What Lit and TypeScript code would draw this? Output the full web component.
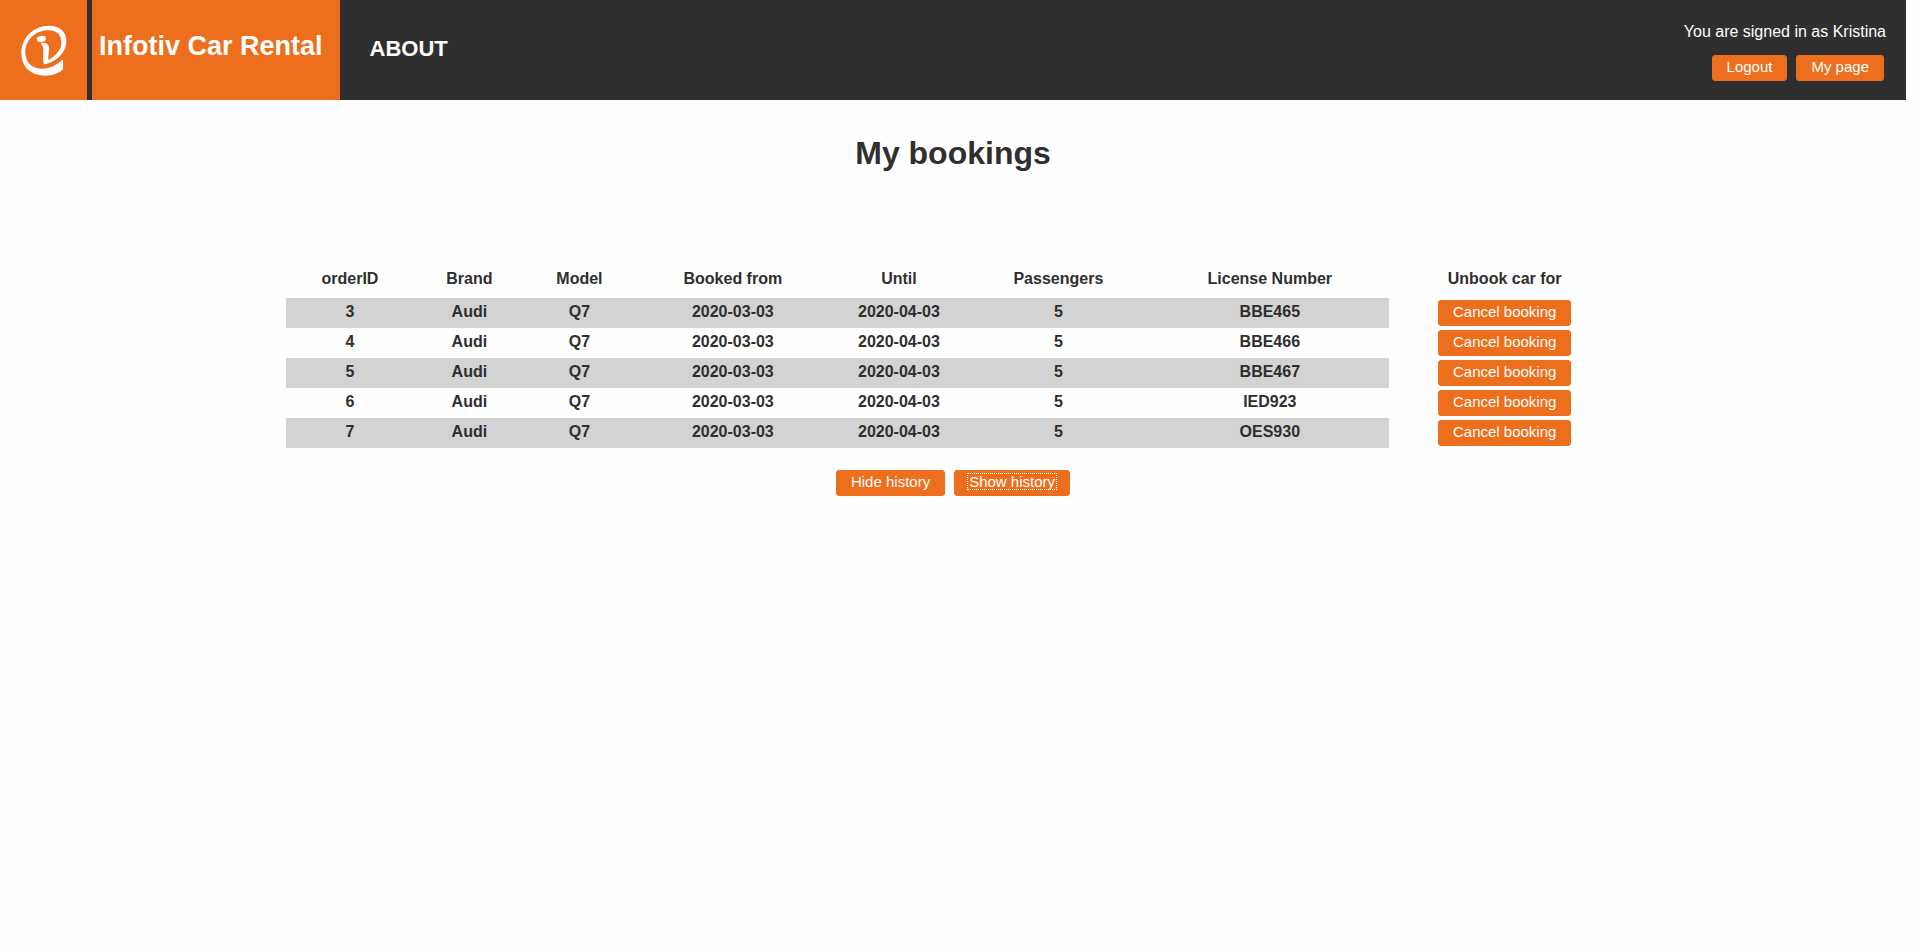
import { LitElement, html, css } from "lit";
import { customElement, state } from "lit/decorators.js";

interface Booking {
  id: number;
  brand: string;
  model: string;
  from: string;
  until: string;
  passengers: number;
  license: string;
}

const licenses: [number, string][] = [
  [3, "BBE465"],
  [4, "BBE466"],
  [5, "BBE467"],
  [6, "IED923"],
  [7, "OES930"],
];

@customElement("app-root")
export class AppRoot extends LitElement {
  @state() private bookings: Booking[] = licenses.map(([id, license]) => ({
    id,
    license,
    brand: "Audi",
    model: "Q7",
    from: "2020-03-03",
    until: "2020-04-03",
    passengers: 5,
  }));

  static styles = css`
    :host {
      display: block;
      box-sizing: border-box;
      min-height: 100vh;
      padding-right: 14px;
      background: #fefefe;
      color: #2f2f2f;
      font-family: "Liberation Sans", Arial, sans-serif;
      font-size: 16px;
      line-height: 18px;
    }
    .header {
      display: flex;
      height: 100px;
      background: #2f2f2f;
      color: #fefefe;
    }
    .logo {
      box-sizing: border-box;
      width: 87px;
      padding: 15px 0 0 10px;
      margin-right: 5px;
      background: #ed6f1d;
    }
    .logo svg {
      display: block;
      width: 70px;
      height: 70px;
    }
    .brand {
      margin: 0;
      padding: 30px 17px 0 7px;
      background: #ed6f1d;
      font-size: 27px;
      line-height: 32px;
      white-space: nowrap;
    }
    .brand a,
    .about {
      color: inherit;
      text-decoration: none;
    }
    .about {
      padding: 37px 0 0 30px;
      font-size: 22px;
      font-weight: bold;
      line-height: 24px;
    }
    .account {
      margin-left: auto;
      padding: 23px 20px 0 0;
      text-align: right;
    }
    .account p {
      margin: 0 0 14px;
    }
    .buttons {
      display: flex;
      justify-content: center;
      gap: 9px;
    }
    .account .buttons {
      justify-content: flex-end;
      padding-right: 2px;
    }
    .button {
      box-sizing: border-box;
      height: 26px;
      margin: 0;
      padding: 2px 14px 5px;
      border: 1px solid #ed6f1d;
      border-radius: 3px;
      background: #ed6f1d;
      color: #fefefe;
      font-family: inherit;
      font-size: 15px;
      line-height: 17px;
      white-space: nowrap;
      cursor: pointer;
    }
    .button.focused {
      padding: 2px 12px 5px;
    }
    .button.focused span {
      display: block;
      padding: 0 2px;
      outline: 1px dotted #fefefe;
      outline-offset: -1px;
    }
    .title {
      margin: 0;
      padding: 34px 0 98px;
      font-size: 32px;
      line-height: 38px;
      text-align: center;
    }
    .bookings {
      width: 70%;
      margin: 0 auto 22px;
      border-collapse: collapse;
      table-layout: fixed;
      font-weight: bold;
      text-align: center;
    }
    .bookings th {
      padding: 0 0 10px;
    }
    .bookings td {
      height: 30px;
      box-sizing: border-box;
      padding: 5px 0 0;
      vertical-align: top;
    }
    .bookings tbody tr:nth-child(odd) td:not(.action) {
      background: #d3d3d3;
    }
    .bookings td.action {
      padding: 2px 0;
    }
    .action .button {
      display: block;
      margin: 0 auto;
    }
    .c-id { width: 9.6%; }
    .c-brand { width: 8.3%; }
    .c-model { width: 8.2%; }
    .c-from { width: 14.8%; }
    .c-until { width: 10.1%; }
    .c-pass { width: 13.8%; }
    .c-license { width: 17.9%; }
    .c-action { width: 17.3%; }
  `;

  render() {
    return html`
      <header class="header">
        <a class="logo" href="#" aria-label="Infotiv">
          <svg viewBox="30 45 210 210" fill="#fefefe" aria-hidden="true">
            <path
              d="M189 178C170 197 147 207 123 206C94 205 76 186 76 156C76 120 107 91 144 91C169 91 184 104 184 127C184 149 168 168 145 180C144 168 148 153 147 142C146 132 136 127 122 129C124 133 128 136 129 143C131 159 127 178 132 193C168 187 199 159 199 122C199 94 178 77 147 77C101 77 64 113 64 159C64 202 94 227 136 227C157 227 177 220 189 208Z"
            />
            <ellipse cx="124" cy="117" rx="14" ry="9" transform="rotate(-10 124 117)" />
          </svg>
        </a>
        <h1 class="brand"><a href="#">Infotiv Car Rental</a></h1>
        <a class="about" href="#about">ABOUT</a>
        <div class="account">
          <p>You are signed in as Kristina</p>
          <div class="buttons">
            <button class="button" type="button">Logout</button>
            <button class="button" type="button">My page</button>
          </div>
        </div>
      </header>
      <main>
        <h2 class="title">My bookings</h2>
        <table class="bookings">
          <thead>
            <tr>
              <th class="c-id" scope="col">orderID</th>
              <th class="c-brand" scope="col">Brand</th>
              <th class="c-model" scope="col">Model</th>
              <th class="c-from" scope="col">Booked from</th>
              <th class="c-until" scope="col">Until</th>
              <th class="c-pass" scope="col">Passengers</th>
              <th class="c-license" scope="col">License Number</th>
              <th class="c-action" scope="col">Unbook car for</th>
            </tr>
          </thead>
          <tbody>
            ${this.bookings.map(
              (b) => html`<tr>
                <td>${b.id}</td>
                <td>${b.brand}</td>
                <td>${b.model}</td>
                <td>${b.from}</td>
                <td>${b.until}</td>
                <td>${b.passengers}</td>
                <td>${b.license}</td>
                <td class="action">
                  <button class="button" type="button">Cancel booking</button>
                </td>
              </tr>`
            )}
          </tbody>
        </table>
        <div class="buttons">
          <button class="button" type="button">Hide history</button>
          <button class="button focused" type="button"><span>Show history</span></button>
        </div>
      </main>
    `;
  }
}
